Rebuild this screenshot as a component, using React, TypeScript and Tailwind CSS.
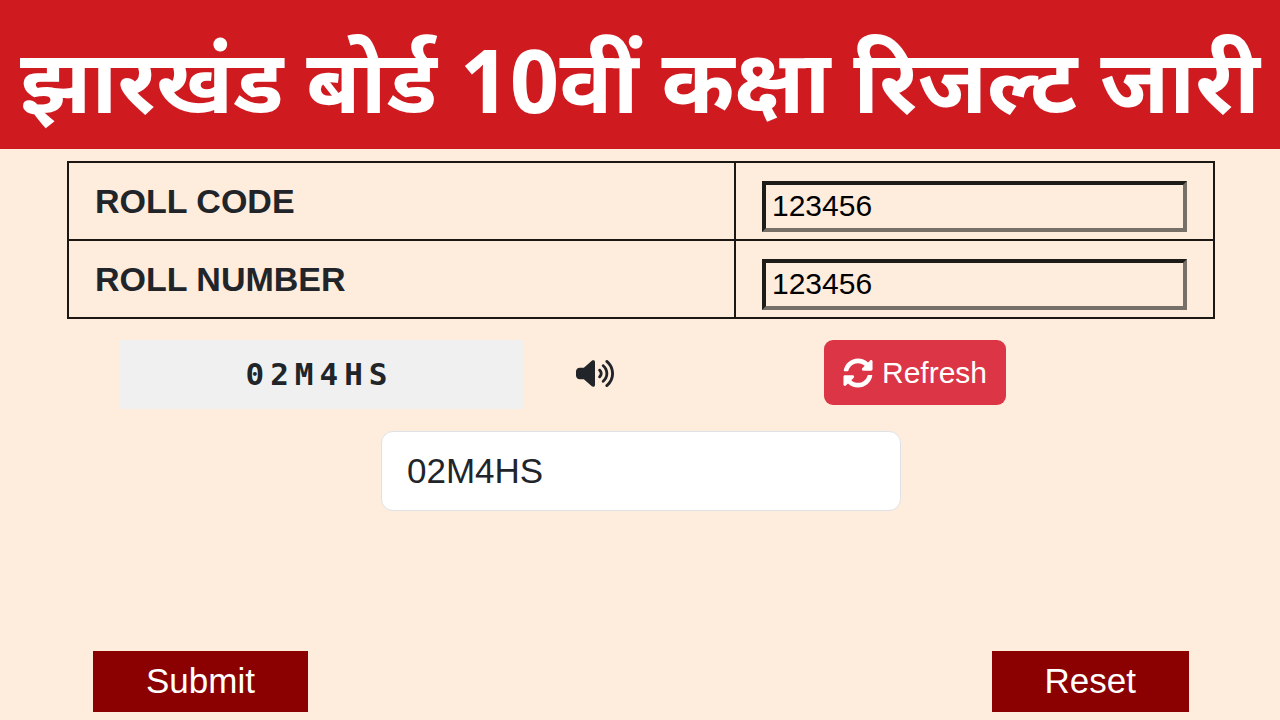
import { useState } from "react";
import { FaSyncAlt } from "react-icons/fa";
import { FaVolumeHigh } from "react-icons/fa6";

const CAPTCHA = "02M4HS";

const fieldClass =
  "block h-[51px] w-full border-4 border-t-[#1e1c19] border-l-[#1e1c19] border-r-[#767069] border-b-[#767069] bg-transparent px-1.5 pb-0.5 text-[30px] text-black outline-none";

export default function App() {
  const [rollCode, setRollCode] = useState("123456");
  const [rollNumber, setRollNumber] = useState("123456");
  const [answer, setAnswer] = useState(CAPTCHA);

  const handleReset = () => {
    setRollCode("");
    setRollNumber("");
    setAnswer("");
  };

  return (
    <div className="flex min-h-screen flex-col bg-[#feecdd] font-['Liberation_Sans',Arial,sans-serif] text-[#212529]">
      <header className="flex h-[149px] items-center justify-center bg-[#cf1a20] px-4 pt-[34px]">
        <h1 className="whitespace-nowrap font-['Noto_Sans_Devanagari','Noto_Sans',sans-serif] text-[88px] leading-none font-bold text-white">
          झारखंड बोर्ड 10वीं कक्षा रिजल्ट जारी
        </h1>
      </header>

      <form
        className="flex flex-1 flex-col pt-3 pr-[65px] pl-[67px]"
        onSubmit={(e) => e.preventDefault()}
      >
        <table className="w-full table-fixed border-collapse border-2 border-[#1c1713]">
          <colgroup>
            <col className="w-[58.2%]" />
            <col />
          </colgroup>
          <tbody>
            <tr>
              <th className="border-2 border-[#1c1713] px-[26px] text-left align-middle text-[34px] font-bold">
                <label htmlFor="roll-code">ROLL CODE</label>
              </th>
              <td className="border-2 border-[#1c1713] px-[26px] pt-[18px] pb-[7px]">
                <input
                  id="roll-code"
                  type="text"
                  className={fieldClass}
                  value={rollCode}
                  onChange={(e) => setRollCode(e.target.value)}
                />
              </td>
            </tr>
            <tr>
              <th className="border-2 border-[#1c1713] px-[26px] text-left align-middle text-[34px] font-bold">
                <label htmlFor="roll-number">ROLL NUMBER</label>
              </th>
              <td className="border-2 border-[#1c1713] px-[26px] pt-[18px] pb-[7px]">
                <input
                  id="roll-number"
                  type="text"
                  className={fieldClass}
                  value={rollNumber}
                  onChange={(e) => setRollNumber(e.target.value)}
                />
              </td>
            </tr>
          </tbody>
        </table>

        {/* Captcha */}
        <div className="mt-[21px] flex items-start pl-[52px]">
          <div className="flex h-[69px] w-[405px] items-center justify-center bg-[#f0f0f0] pr-1 font-['DejaVu_Sans_Mono',monospace] text-[31px] font-bold tracking-[6px]">
            {CAPTCHA}
          </div>
          <button
            type="button"
            aria-label="Listen to captcha"
            className="ml-[52px] flex h-[66px] items-center"
          >
            <FaVolumeHigh className="h-[31px] w-[38px]" />
          </button>
          <button
            type="button"
            className="ml-[210px] flex h-[65px] items-center gap-[9px] rounded-[9px] bg-[#dc3545] px-[19px] text-[30px] text-white"
            onClick={() => setAnswer("")}
          >
            <FaSyncAlt className="size-[30px]" />
            Refresh
          </button>
        </div>
        <input
          type="text"
          aria-label="Enter captcha"
          className="mt-[22px] h-20 w-[520px] self-center rounded-xl border border-[#dee2e6] bg-white px-[25px] text-[35px] outline-none"
          value={answer}
          onChange={(e) => setAnswer(e.target.value)}
        />

        <div className="mt-auto flex justify-between px-[26px] pb-2">
          <button
            type="submit"
            className="h-[61px] bg-[#8b0000] px-[53px] text-[35px] text-white"
          >
            Submit
          </button>
          <button
            type="button"
            className="h-[61px] bg-[#8b0000] px-[53px] text-[35px] text-white"
            onClick={handleReset}
          >
            Reset
          </button>
        </div>
      </form>
    </div>
  );
}
